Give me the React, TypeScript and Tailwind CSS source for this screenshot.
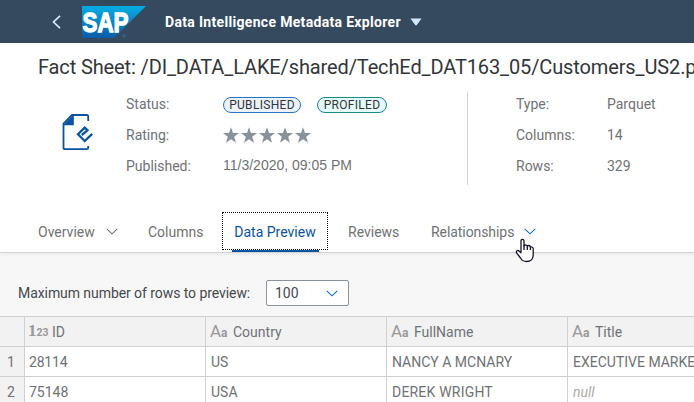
import type { ReactNode } from "react";

function Chevron({ className }: { className: string }) {
  return (
    <svg width="12" height="7" viewBox="0 0 12 7" fill="none" stroke="currentColor" strokeWidth="1.1" className={className}>
      <path d="M0.7 0.8 L6 5.8 L11.3 0.8" />
    </svg>
  );
}

function SapLogo() {
  return (
    <svg width="64" height="32" viewBox="0 0 64 32" className="ml-[20px] shrink-0">
      <defs>
        <linearGradient id="sap" x1="0" y1="0" x2="0" y2="1">
          <stop offset="0" stopColor="#05aee4" />
          <stop offset="0.5" stopColor="#0a84c6" />
          <stop offset="1" stopColor="#0a5ca8" />
        </linearGradient>
      </defs>
      <path d="M0 0H64L32 32H0Z" fill="url(#sap)" />
      <text x="0.5" y="25.5" fontSize="27" fontWeight="700" fill="#fff" stroke="#fff" strokeWidth="1.3" textLength="46" lengthAdjust="spacingAndGlyphs" fontFamily="Liberation Sans, sans-serif">
        SAP
      </text>
      <circle cx="42" cy="29.8" r="1.7" fill="#2a64a0" />
    </svg>
  );
}

function FileIcon() {
  return (
    <svg width="32" height="38" viewBox="0 0 32 38" fill="none" stroke="#0854a0" strokeWidth="1.800">
      <path d="M27.200 8V3.500Q27.200 2 25.700 2H11L2.500 10.500V34.500Q2.500 36.200 4 36.200H25.700Q27.200 36.200 27.200 34.700V33" />
      <path d="M12.800 1.500V12.300H2Z" fill="#0854a0" stroke="none" />
      <path d="M20.800 22L26.500 17.300L23.700 14.600L17 21.300L23.700 28L31.200 20.800" strokeWidth="2.300" />
    </svg>
  );
}

function Star() {
  return (
    <svg width="18" height="17" viewBox="0 0 18 17" fill="#89919a">
      <path d="M8 0.3L10 6H16L11.200 9.800L13 15.800L8 12.300L3 15.800L4.800 9.800L0 6H6Z" />
    </svg>
  );
}

function Cursor() {
  return (
    <svg width="20" height="25" viewBox="0 0 20 25" fill="#fff" stroke="#15152b" strokeWidth="1.300" strokeLinejoin="round" className="absolute left-[515px] top-[238px]">
      <path d="M6 14.800V3Q6 1.300 7.500 1.300Q9 1.300 9 3V8Q9.300 6.800 10.700 6.800Q12.300 6.900 12.300 8.500Q12.700 7.300 14 7.500Q15.400 7.800 15.400 9.400Q16 8.600 17 9Q18.300 9.500 18.200 11V17Q18 23.500 11.500 23.500Q7.500 23.500 5.500 20L1.500 14.700Q1 13.300 2 12.700Q3.200 12.200 4.200 13.200Z" />
      <path d="M9 7.500V12M12.300 8.500V12M15.400 9.400V12" fill="none" />
    </svg>
  );
}

function TextType() {
  return (
    <span className="-ml-px mr-[4px] flex w-[19px] shrink-0 items-baseline text-[#999]">
      <span className="text-[17px] leading-[20px]">A</span>
      <span className="text-[12px] font-bold leading-[20px]">a</span>
    </span>
  );
}

function NumberType() {
  return (
    <span className="-ml-[2px] mr-[3px] flex w-[21px] shrink-0 items-baseline text-[#999]">
      <span className="font-['Liberation_Serif',serif] text-[17px] font-bold leading-[20px]">1</span>
      <span className="text-[10.5px] font-bold leading-[20px]">23</span>
    </span>
  );
}

function Cell({ children, head }: { children: ReactNode; head?: boolean }) {
  return (
    <div className={`flex h-[30px] w-[181px] shrink-0 items-center whitespace-nowrap border-b border-r border-[#d0d0d0] pl-[5px] ${head ? "bg-[#f2f2f2]" : "bg-white"}`}>
      {children}
    </div>
  );
}

function RowNumber({ children }: { children?: ReactNode }) {
  return <div className="flex h-[30px] w-[25px] shrink-0 items-center border-b border-r border-[#d0d0d0] bg-[#f2f2f2] pl-[7px]">{children}</div>;
}

export default function App() {
  return (
    <div className="relative flex h-[402px] w-[694px] flex-col overflow-hidden bg-[#f7f7f7] font-[Roboto,sans-serif] text-[14px] leading-[18px] text-[#6f7275]">
      <header className="flex h-[43px] shrink-0 items-center bg-[#354a5f] pl-[52px]">
        <svg width="10" height="14" viewBox="0 0 10 14" fill="none" stroke="#d8eaff" strokeWidth="1.700">
          <path d="M8 0.800L1.500 7L8 13.200" />
        </svg>
        <SapLogo />
        <span className="ml-[19px] w-[237px] whitespace-nowrap text-[14px] font-bold tracking-[0.320px] text-white">Data Intelligence Metadata Explorer</span>
        <svg width="12" height="8" viewBox="0 0 12 8" fill="#d1e8ff" className="ml-[8px]">
          <path d="M0.500 0.500H11.500L6.700 7.200H5.300Z" />
        </svg>
      </header>

      <section className="flex h-[210px] shrink-0 flex-col border-b border-[#d3d3d3] bg-white shadow-[0_1px_4px_rgba(0,0,0,0.08)]">
        <h1 className="mt-[12px] h-[24px] whitespace-nowrap pl-[38px] text-[20px] leading-[24px] tracking-[-0.125px] text-[#32363a]">
          Fact Sheet: /DI_DATA_LAKE/shared/TechEd_DAT163_05/Customers_US2.parquet
        </h1>
        <div className="mt-[13px] flex h-[93px] pl-[61px]">
          <div className="w-[65px] pt-[21px]">
            <FileIcon />
          </div>
          <div className="grid w-[342px] grid-cols-[97px_1fr] grid-rows-[24px_38px_24px] content-start items-center border-r border-[#d0d0d0]">
            <span>Status:</span>
            <div className="flex gap-[16px] pt-[2px] text-[12px] leading-[14px] tracking-[0.300px] text-[#32363a]">
              <span className="flex h-[16px] w-[78px] items-center justify-center rounded-full border border-[#2a74c5] bg-[#ebf2fa]">PUBLISHED</span>
              <span className="flex h-[16px] w-[70px] items-center justify-center rounded-full border border-[#158a8a] bg-[#e5fafa]">PROFILED</span>
            </div>
            <span>Rating:</span>
            <div className="flex">
              {[1, 2, 3, 4, 5].map((n) => (
                <Star key={n} />
              ))}
            </div>
            <span>Published:</span>
            <span className="pb-[2px] font-['Liberation_Sans',sans-serif]">11/3/2020, 09:05 PM</span>
          </div>
          <div className="ml-[48px] grid grid-cols-[91px_1fr] grid-rows-[24px_38px_24px] content-start items-center">
            <span>Type:</span>
            <span>Parquet</span>
            <span>Columns:</span>
            <span>14</span>
            <span>Rows:</span>
            <span>329</span>
          </div>
        </div>
        <nav className="mt-[27px] flex h-[40px] pl-[38px] leading-[40px]">
          <div className="flex w-[110px]">
            <span className="w-[68px]">Overview</span>
            <Chevron className="mt-[16px]" />
          </div>
          <span className="w-[74px]">Columns</span>
          <div className="flex w-[106px] flex-col items-center">
            <span className="flex h-[38px] w-full items-center justify-center border border-dotted border-black pt-[2px] text-[#0854a0]">Data Preview</span>
            <span className="h-[2px] w-[87px] bg-[#0854a0]" />
          </div>
          <span className="ml-[20px] w-[83px]">Reviews</span>
          <span className="w-[93px] tracking-[-0.070px]">Relationships</span>
          <Chevron className="mt-[16px] text-[#0a6ed1]" />
        </nav>
      </section>

      <div className="flex h-[63px] shrink-0 items-center pl-[18px] pt-[17px] text-[#45494d]">
        <span className="w-[248px] whitespace-nowrap tracking-[-0.070px]">Maximum number of rows to preview:</span>
        <div className="flex h-[26px] w-[83px] items-center justify-between rounded-[2px] border border-[#89919a] bg-white pl-[8px] pr-[10px]">
          <span>100</span>
          <Chevron className="text-[#0a6ed1]" />
        </div>
      </div>

      <div className="flex flex-col border-t border-[#d0d0d0]">
        <div className="flex">
          <RowNumber />
          <Cell head><NumberType />ID</Cell>
          <Cell head><TextType />Country</Cell>
          <Cell head><TextType />FullName</Cell>
          <Cell head><TextType />Title</Cell>
        </div>
        <div className="flex">
          <RowNumber>1</RowNumber>
          <Cell><span className="-ml-px tracking-[-0.200px]">28114</span></Cell>
          <Cell>US</Cell>
          <Cell>NANCY A MCNARY</Cell>
          <Cell>EXECUTIVE MARKETING</Cell>
        </div>
        <div className="flex">
          <RowNumber>2</RowNumber>
          <Cell><span className="-ml-px">75148</span></Cell>
          <Cell>USA</Cell>
          <Cell><span className="tracking-[0.200px]">DEREK WRIGHT</span></Cell>
          <Cell><i className="text-[#aaa]">null</i></Cell>
        </div>
      </div>
      <Cursor />
    </div>
  );
}
